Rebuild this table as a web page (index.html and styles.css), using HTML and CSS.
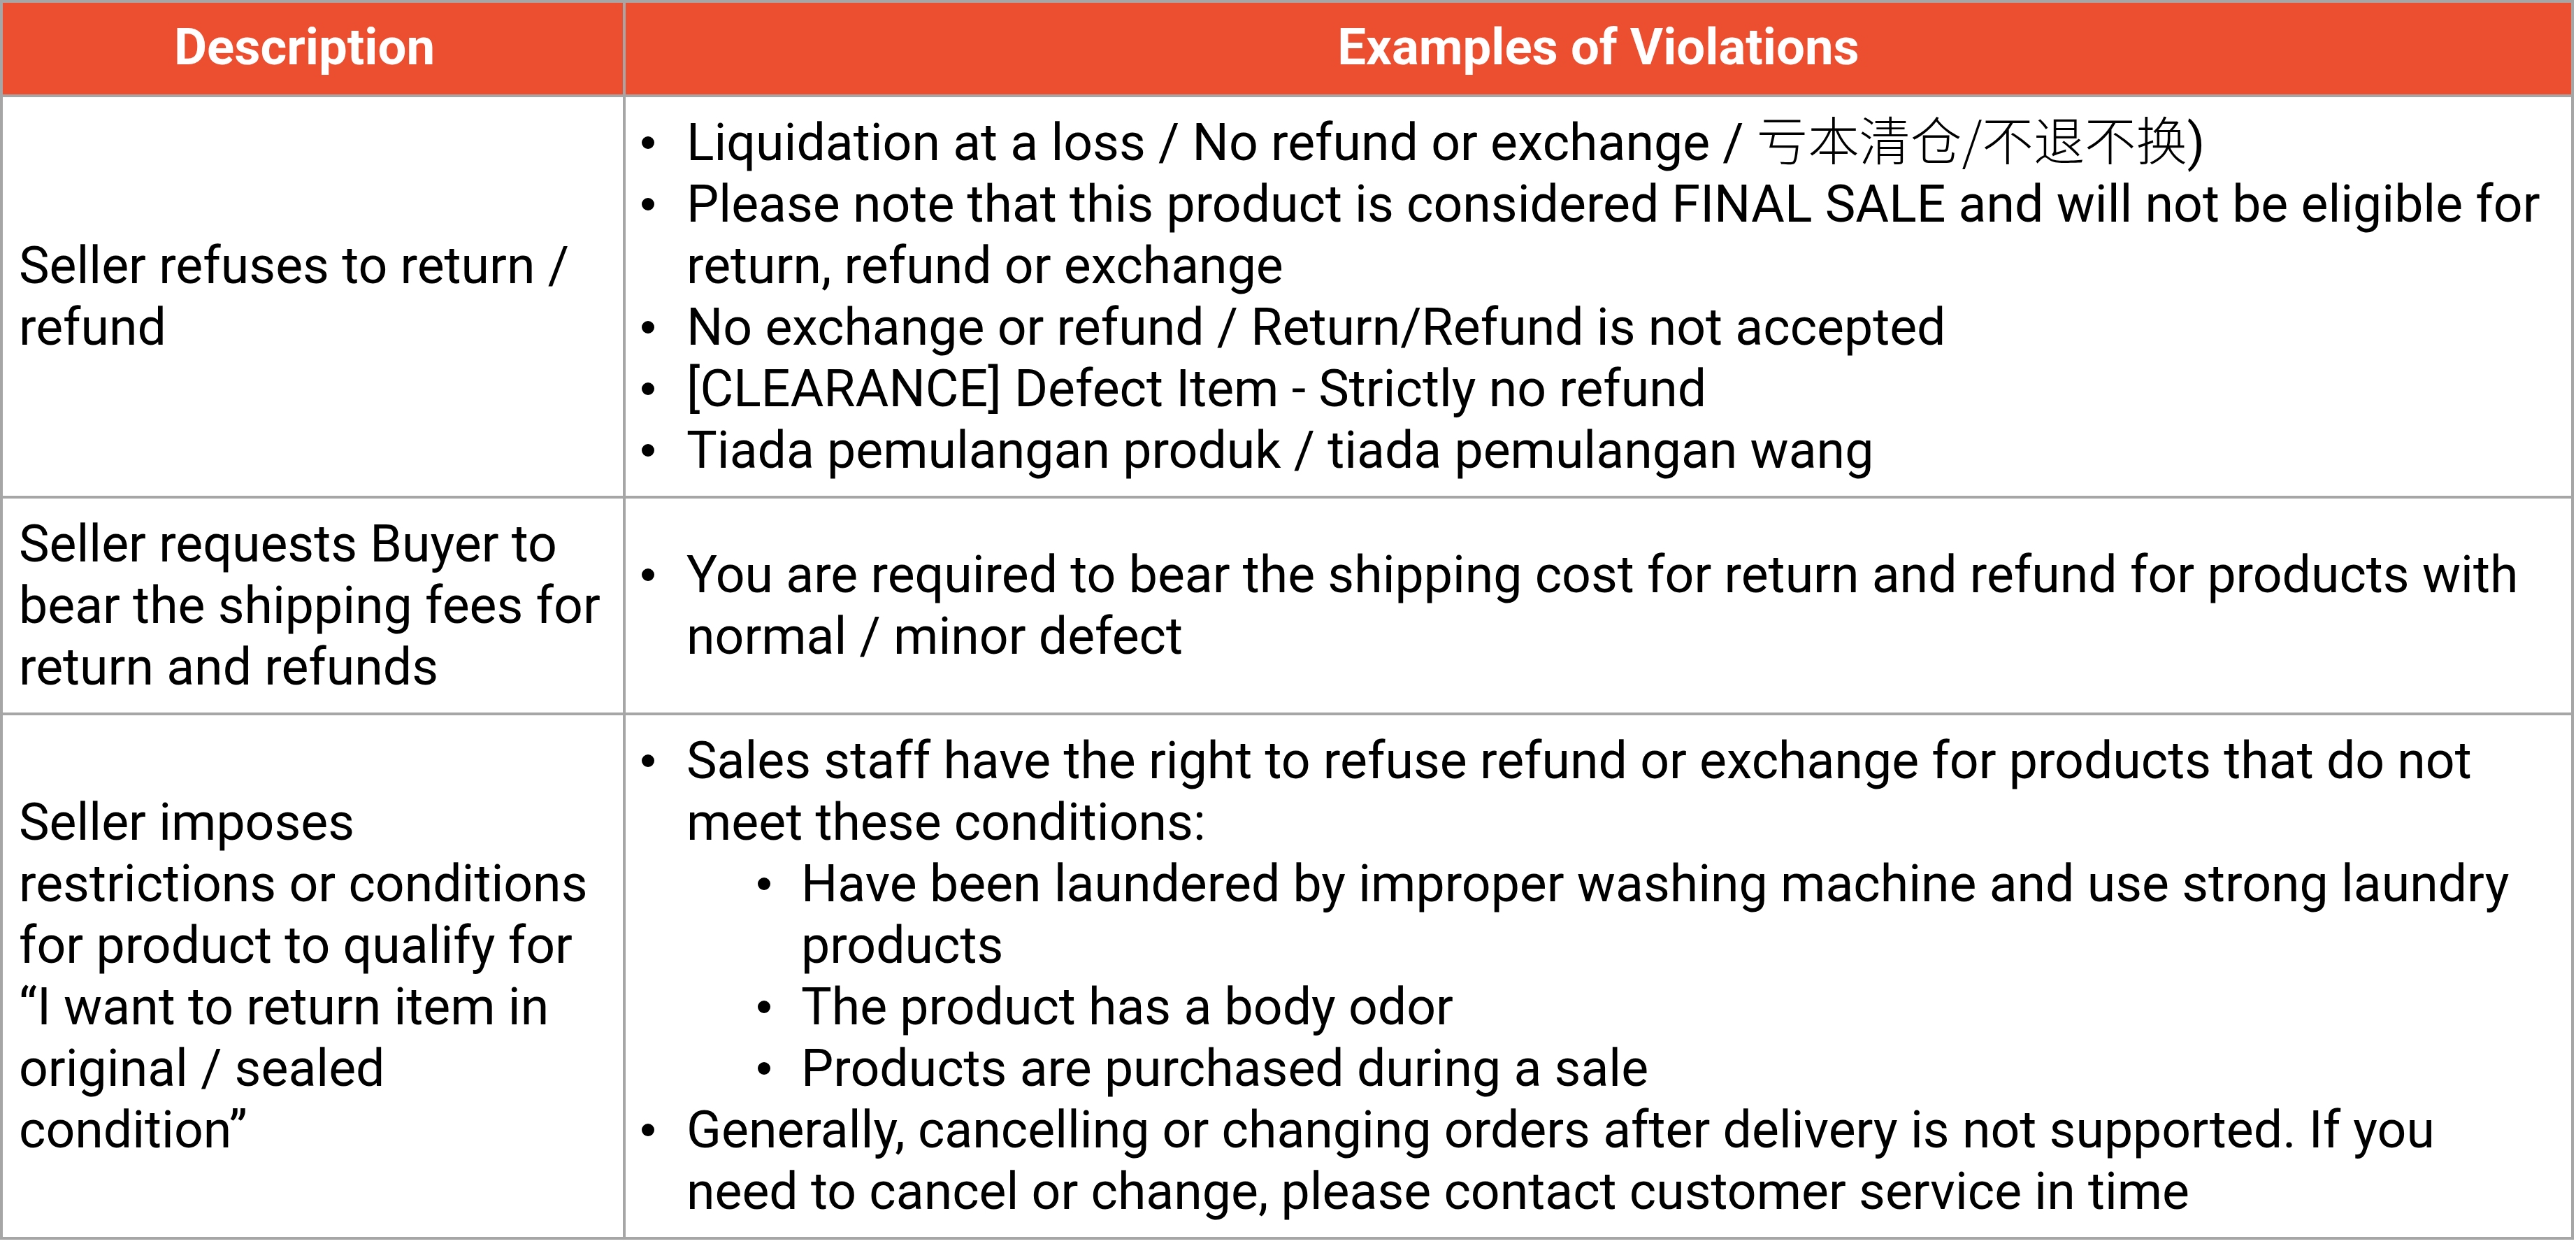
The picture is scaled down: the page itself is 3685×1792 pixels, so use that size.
FILE: index.html
```html
<!DOCTYPE html>
<html lang="en">
<head>
<meta charset="utf-8">
<title>Return / Refund Violations</title>
<link rel="stylesheet" href="styles.css">
</head>
<body>
<table class="policy">
  <colgroup>
    <col class="col-desc">
    <col class="col-ex">
  </colgroup>
  <thead>
    <tr>
      <th class="head-desc">Description</th>
      <th>Examples of Violations</th>
    </tr>
  </thead>
  <tbody>
    <tr>
      <td class="desc">Seller refuses to return / refund</td>
      <td class="ex">
        <ul class="bullets">
          <li>Liquidation at a loss / No refund or exchange / <span class="cjk">亏本清仓/不退不换</span>)</li>
          <li>Please note that this product is considered FINAL SALE and will not be eligible for return, refund or exchange</li>
          <li>No exchange or refund / Return/Refund is not accepted</li>
          <li>[CLEARANCE] Defect Item - Strictly no refund</li>
          <li>Tiada pemulangan produk / tiada pemulangan wang</li>
        </ul>
      </td>
    </tr>
    <tr>
      <td class="desc">Seller requests Buyer to bear the shipping fees for return and refunds</td>
      <td class="ex">
        <ul class="bullets">
          <li>You are required to bear the shipping cost for return and refund for products with normal / minor defect</li>
        </ul>
      </td>
    </tr>
    <tr>
      <td class="desc">Seller imposes restrictions or conditions for product to qualify for “I want to return item in original / sealed condition”</td>
      <td class="ex">
        <ul class="bullets">
          <li>Sales staff have the right to refuse refund or exchange for products that do not meet these conditions:
            <ul class="bullets nested">
              <li>Have been laundered by improper washing machine and use strong laundry products</li>
              <li>The product has a body odor</li>
              <li>Products are purchased during a sale</li>
            </ul>
          </li>
          <li>Generally, cancelling or changing orders after delivery is not supported. If you need to cancel or change, please contact customer service in time</li>
        </ul>
      </td>
    </tr>
  </tbody>
</table>
</body>
</html>
```

FILE: styles.css
```css
html, body {
  margin: 0;
  padding: 0;
  background: #ffffff;
}

body {
  font-family: Roboto, "Noto Sans CJK SC", sans-serif;
  font-size: 73.4px;
  line-height: 88px;
  color: #000000;
}

.policy {
  border-collapse: collapse;
  table-layout: fixed;
  width: 3682px;
  border: 4px solid #a6a6a6;
}

.col-desc {
  width: 891px;
}

.policy th,
.policy td {
  border: 4px solid #a6a6a6;
  vertical-align: middle;
}

.policy th {
  background: #ec4f2f;
  color: #ffffff;
  font-size: 72.5px;
  font-weight: 700;
  text-align: center;
  padding: 20px 25px 23px;
}

.policy th.head-desc {
  padding-left: 13px;
  padding-right: 37px;
}

.policy td {
  padding: 21px 30px 21px 23px;
  text-align: left;
  font-weight: 400;
}

.policy td.desc {
  padding-right: 25px;
}

.cjk {
  font-family: "Noto Sans CJK SC", sans-serif;
  font-weight: 300;
  line-height: 1;
}

.bullets {
  list-style: none;
  margin: 0;
  padding: 0;
}

.bullets li {
  position: relative;
  padding-left: 64px;
}

.bullets li::before {
  content: "";
  position: absolute;
  left: 0;
  top: 35px;
  width: 18px;
  height: 18px;
  border-radius: 50%;
  background: #000000;
}

.nested {
  margin-left: 102px;
}

.nested li {
  padding-left: 62px;
}
```
